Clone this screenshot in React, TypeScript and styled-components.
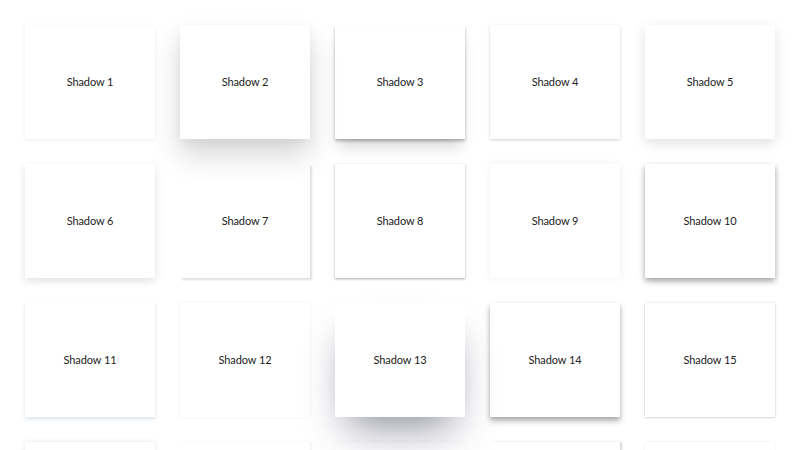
import React from "react";
import styled, { createGlobalStyle } from "styled-components";

const GlobalStyle = createGlobalStyle`
  html, body {
    margin: 0;
    padding: 0;
    background: #ffffff;
    overflow: hidden;
  }
  body {
    font-family: Lato, "Noto Sans", Arial, sans-serif;
  }
`;

const Gallery = styled.main`
  display: grid;
  grid-template-columns: repeat(5, 130px);
  grid-auto-rows: 114px;
  gap: 25px;
  padding: 25px;
`;

// Cards are transparent so neighbouring shadows show through them.
const Card = styled.div<{ $shadow: string }>`
  display: flex;
  align-items: center;
  justify-content: center;
  padding-bottom: 1px;
  background: transparent;
  box-shadow: ${(p) => p.$shadow};
`;

const Label = styled.span`
  font-size: 11px;
  line-height: 14px;
  color: #222222;
  letter-spacing: -0.1px;
`;

const shadows: string[] = [
  "0 1px 4px rgba(0,0,0,0.08)",
  "0 16px 28px rgba(0,0,0,0.16), 0 4px 10px rgba(0,0,0,0.05)",
  "0 2px 3px rgba(0,0,0,0.28), 0 12px 14px -4px rgba(0,0,0,0.16)",
  "0 1px 3px rgba(0,0,0,0.18)",
  "0 4px 12px rgba(0,0,0,0.12)",
  "0 3px 8px rgba(0,0,0,0.12)",
  "2px 2px 2px rgba(0,0,0,0.13)",
  "0 1px 3px rgba(0,0,0,0.12), 0 1px 2px rgba(0,0,0,0.24)",
  "0 0 8px rgba(0,0,0,0.06)",
  "0 3px 6px rgba(0,0,0,0.16), 0 3px 6px rgba(0,0,0,0.23)",
  "0 2px 4px rgba(80,110,150,0.2)",
  "0 0 4px rgba(0,0,0,0.06)",
  "rgba(50,50,93,0.3) 0 26px 44px -10px, rgba(0,0,0,0.3) 0 18px 36px -18px",
  "0 4px 6px rgba(0,0,0,0.3), 0 1px 3px rgba(0,0,0,0.1)",
  "0 0 2px rgba(0,0,0,0.2), 0 1px 2px rgba(0,0,0,0.1)",
  "0 0 5px rgba(0,0,0,0.1)",
  "1px 0 2px rgba(0,0,0,0.08)",
  "0 0 3px rgba(0,0,0,0.05)",
  "2px 0 2px rgba(0,0,0,0.15)",
  "0 0 2px rgba(0,0,0,0.1)",
];

export default function App() {
  return (
    <>
      <GlobalStyle />
      <Gallery>
        {shadows.map((s, i) => (
          <Card key={i} $shadow={s}>
            <Label>Shadow {i + 1}</Label>
          </Card>
        ))}
      </Gallery>
    </>
  );
}
